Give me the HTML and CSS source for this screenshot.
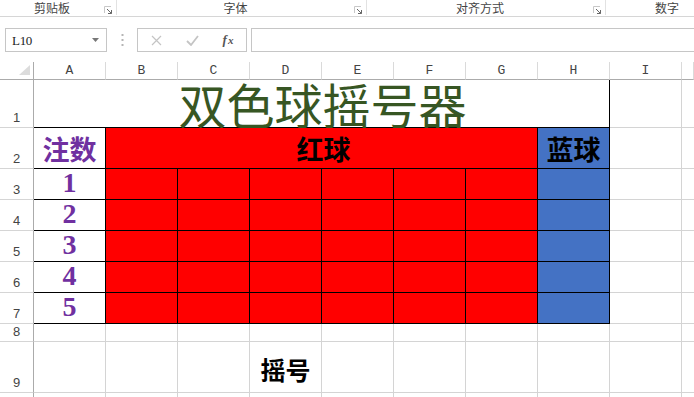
FILE: index.html
```html
<!DOCTYPE html>
<html lang="zh">
<head>
<meta charset="utf-8">
<link rel="stylesheet" href="styles.css">
</head>
<body>
<div class="ribbon">
  <div class="grp g1"><span class="glabel">剪贴板</span><svg class="launch" width="8" height="8" viewBox="0 0 8 8"><path d="M0.5 7V0.5H7" fill="none" stroke="#c8c8c8"/><path d="M3 3L7.5 7.5M4 7.5H7.5V4" fill="none" stroke="#666"/></svg></div>
  <div class="grp g2"><span class="glabel">字体</span><svg class="launch" width="8" height="8" viewBox="0 0 8 8"><path d="M0.5 7V0.5H7" fill="none" stroke="#c8c8c8"/><path d="M3 3L7.5 7.5M4 7.5H7.5V4" fill="none" stroke="#666"/></svg></div>
  <div class="grp g3"><span class="glabel">对齐方式</span><svg class="launch" width="8" height="8" viewBox="0 0 8 8"><path d="M0.5 7V0.5H7" fill="none" stroke="#c8c8c8"/><path d="M3 3L7.5 7.5M4 7.5H7.5V4" fill="none" stroke="#666"/></svg></div>
  <div class="grp g4"><span class="glabel">数字</span></div>
</div>

<div class="fbar">
  <div class="namebox"><span class="nameval">L10</span><svg width="7" height="4" viewBox="0 0 7 4"><path d="M0 0H7L3.5 4Z" fill="#777"/></svg></div>
  <div class="dots"><svg width="3" height="12" viewBox="0 0 3 12"><rect x="0.5" y="0" width="2" height="2" fill="#b5b5b5"/><rect x="0.5" y="5" width="2" height="2" fill="#b5b5b5"/><rect x="0.5" y="10" width="2" height="2" fill="#b5b5b5"/></svg></div>
  <div class="fxbox">
    <span class="fxbtn"><svg width="11" height="11" viewBox="0 0 11 11"><path d="M1 1L10 10M10 1L1 10" stroke="#c4c4c4" stroke-width="1.2"/></svg></span>
    <span class="fxbtn"><svg width="13" height="11" viewBox="0 0 13 11"><path d="M1 6L5 10L12 1" fill="none" stroke="#c4c4c4" stroke-width="1.8"/></svg></span>
    <span class="fxbtn fxtext"><i>f</i><i class="xx">x</i></span>
  </div>
  <div class="finput"></div>
</div>

<div class="sheet">
  <div class="corner"><svg width="11" height="10" viewBox="0 0 11 10"><path d="M11 0V10H0Z" fill="#dcdcdc"/></svg></div>
  <div class="ch">A</div><div class="ch">B</div><div class="ch">C</div><div class="ch">D</div><div class="ch">E</div><div class="ch">F</div><div class="ch">G</div><div class="ch">H</div><div class="ch">I</div><div class="ch last"></div>

  <div class="rh">1</div>
  <div class="c title bb br">双色球摇号器</div>
  <div class="c"></div><div class="c last"></div>

  <div class="rh">2</div>
  <div class="c bb br zhu">注数</div>
  <div class="c bb br red hong">红球</div>
  <div class="c bb br blue lan">蓝球</div>
  <div class="c"></div><div class="c last"></div>

  <div class="rh">3</div>
  <div class="c bb br num">1</div>
  <div class="c bb br red"></div><div class="c bb br red"></div><div class="c bb br red"></div><div class="c bb br red"></div><div class="c bb br red"></div><div class="c bb br red"></div>
  <div class="c bb br blue"></div>
  <div class="c"></div><div class="c last"></div>

  <div class="rh">4</div>
  <div class="c bb br num">2</div>
  <div class="c bb br red"></div><div class="c bb br red"></div><div class="c bb br red"></div><div class="c bb br red"></div><div class="c bb br red"></div><div class="c bb br red"></div>
  <div class="c bb br blue"></div>
  <div class="c"></div><div class="c last"></div>

  <div class="rh">5</div>
  <div class="c bb br num">3</div>
  <div class="c bb br red"></div><div class="c bb br red"></div><div class="c bb br red"></div><div class="c bb br red"></div><div class="c bb br red"></div><div class="c bb br red"></div>
  <div class="c bb br blue"></div>
  <div class="c"></div><div class="c last"></div>

  <div class="rh">6</div>
  <div class="c bb br num">4</div>
  <div class="c bb br red"></div><div class="c bb br red"></div><div class="c bb br red"></div><div class="c bb br red"></div><div class="c bb br red"></div><div class="c bb br red"></div>
  <div class="c bb br blue"></div>
  <div class="c"></div><div class="c last"></div>

  <div class="rh">7</div>
  <div class="c bb br num">5</div>
  <div class="c bb br red"></div><div class="c bb br red"></div><div class="c bb br red"></div><div class="c bb br red"></div><div class="c bb br red"></div><div class="c bb br red"></div>
  <div class="c bb br blue"></div>
  <div class="c"></div><div class="c last"></div>

  <div class="rh">8</div>
  <div class="c"></div><div class="c"></div><div class="c"></div><div class="c"></div><div class="c"></div><div class="c"></div><div class="c"></div><div class="c"></div><div class="c"></div><div class="c last"></div>

  <div class="rh">9</div>
  <div class="c"></div><div class="c"></div><div class="c"></div>
  <div class="c yao">摇号</div>
  <div class="c"></div><div class="c"></div><div class="c"></div><div class="c"></div><div class="c"></div><div class="c last"></div>

  <div class="rh"></div>
  <div class="c"></div><div class="c"></div><div class="c"></div><div class="c"></div><div class="c"></div><div class="c"></div><div class="c"></div><div class="c"></div><div class="c"></div><div class="c last"></div>
</div>
</body>
</html>
```

FILE: styles.css
```css
* { box-sizing: border-box; }
html, body {
  margin: 0;
  padding: 0;
  background: #fff;
  width: 694px;
  height: 397px;
  overflow: hidden;
  font-family: "Noto Sans CJK SC", "Noto Sans", sans-serif;
}

/* ribbon group labels */
.ribbon {
  display: flex;
  height: 17px;
  border-bottom: 1px solid #d6d6d6;
}
.grp {
  display: flex;
  align-items: center;
  height: 15px;
  border-right: 1px solid #e2e2e2;
}
.g1 { width: 117px; }
.g2 { width: 250px; }
.g3 { width: 239px; }
.g4 { flex: 1; border-right: none; padding-left: 34px; }
.glabel {
  flex: 1;
  text-align: center;
  font-size: 12px;
  line-height: 15px;
  color: #444;
}
.launch { margin-right: 4px; margin-top: 4px; }

/* formula bar */
.fbar {
  display: flex;
  height: 24px;
  margin-top: 11px;
  padding-left: 5px;
}
.namebox {
  width: 102px;
  border: 1px solid #c6c6c6;
  display: flex;
  align-items: center;
  justify-content: space-between;
  padding: 0 7px 0 6px;
}
.nameval {
  font-family: "Liberation Serif", serif;
  font-size: 13px;
  letter-spacing: -0.3px;
  color: #222;
  padding-top: 1px;
}
.dots {
  width: 30px;
  display: flex;
  align-items: center;
  justify-content: center;
}
.fxbox {
  width: 110px;
  border: 1px solid #c6c6c6;
  display: grid;
  grid-template-columns: 36px 36px 36px;
  align-items: center;
}
.fxbtn {
  display: flex;
  justify-content: center;
  align-items: center;
}
.fxtext {
  font-family: "Liberation Serif", serif;
  font-style: italic;
  font-weight: bold;
  font-size: 13px;
  color: #555;
}
.fxtext i { font-style: italic; }
.fxtext .xx { font-size: 11px; margin-left: 1px; }
.finput {
  flex: 1;
  margin-left: 4px;
  border: 1px solid #c6c6c6;
  border-right: none;
}

/* sheet grid */
.sheet {
  margin-top: 10px;
  display: grid;
  grid-template-columns: 34px repeat(9, 72px) 1fr;
  grid-template-rows: 18px 48px 41px 31px 31px 31px 31px 31px 18px 51px 31px;
}
.corner {
  border-right: 1px solid #ababab;
  border-bottom: 1px solid #ababab;
  display: flex;
  align-items: flex-end;
  justify-content: flex-end;
  padding: 0 3px 4px 0;
}
.ch {
  border-right: 1px solid #dadada;
  border-bottom: 1px solid #ababab;
  font-family: "Liberation Mono", monospace;
  font-size: 13px;
  line-height: 17px;
  text-align: center;
  color: #444;
}
.rh {
  border-right: 1px solid #ababab;
  border-bottom: 1px solid #d5d5d5;
  display: flex;
  align-items: flex-end;
  justify-content: center;
  font-family: "Liberation Sans", sans-serif;
  font-size: 13px;
  line-height: 14px;
  color: #444;
  padding-bottom: 2px;
}
.c {
  border-right: 1px solid #d4d4d4;
  border-bottom: 1px solid #d4d4d4;
  display: flex;
  align-items: flex-end;
  justify-content: center;
  line-height: 1;
}
.c.last { border-right: none; }
.c.bb { border-bottom-color: #000; }
.c.br { border-right-color: #000; }
.red { background: #ff0000; }
.blue { background: #4472c4; }

.title {
  grid-column: span 8;
  font-size: 48px;
  color: #375623;
  padding-left: 2px;
}
.zhu {
  font-size: 27px;
  font-weight: bold;
  color: #7030a0;
  padding-bottom: 6px;
}
.hong {
  grid-column: span 6;
  font-size: 27px;
  font-weight: bold;
  color: #000;
  padding-bottom: 6px;
  padding-left: 4px;
}
.lan {
  font-size: 27px;
  font-weight: bold;
  color: #000;
  padding-bottom: 6px;
}
.num {
  font-family: "Liberation Serif", serif;
  font-size: 28px;
  font-weight: bold;
  color: #7030a0;
  padding-bottom: 2px;
}
.yao {
  font-size: 25px;
  font-weight: bold;
  color: #000;
  padding-bottom: 10px;
}
```
